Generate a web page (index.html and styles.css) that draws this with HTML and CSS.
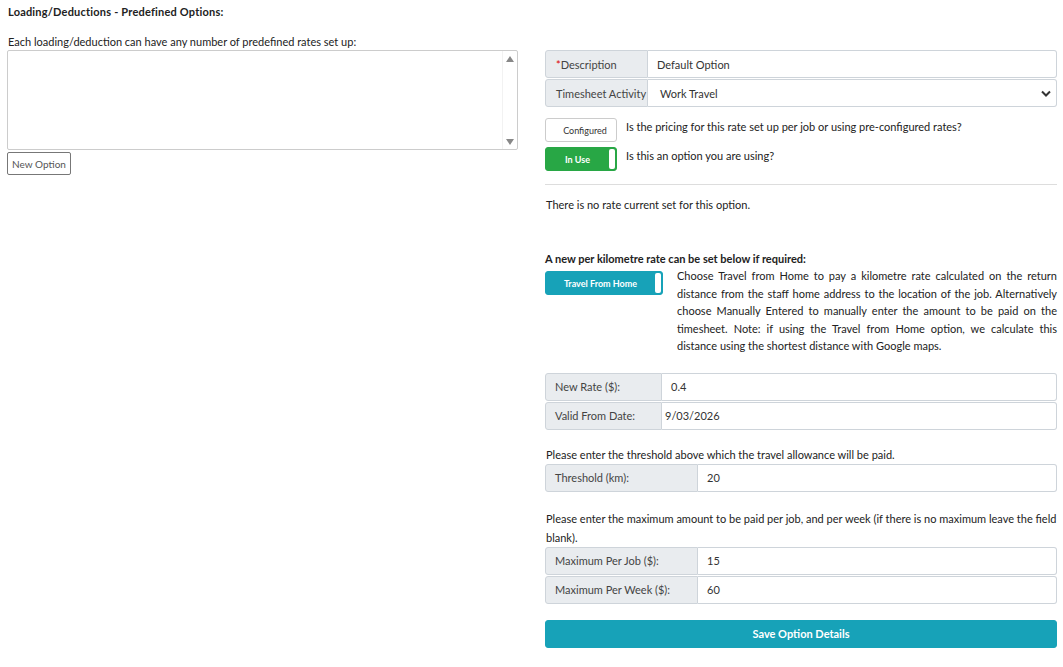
FILE: index.html
```html
<html>
	<head>
		<link rel="stylesheet" href="styles.css">
	</head>
	<body>
		<div class="title">Loading/Deductions - Predefined Options:</div>
		<div class="page">
			<div class="left">
				<div class="intro">Each loading/deduction can have any number of predefined rates set up:</div>
				<div class="listbox">
					<div class="scroll">
						<span class="arrow up"></span>
						<span class="arrow down"></span>
					</div>
				</div>
				<button class="btn-new">New Option</button>
			</div>

			<div class="right">
				<div class="group">
					<div class="row">
						<div class="lbl lbl-desc"><span class="req">*</span>Description</div>
						<div class="val">Default Option</div>
					</div>
					<div class="row">
						<div class="lbl lbl-desc">Timesheet Activity</div>
						<div class="val val-select">Work Travel
							<svg class="chev" width="10" height="7" viewBox="0 0 10 7"><path d="M1 1.5 L5 5.5 L9 1.5" fill="none" stroke="#333" stroke-width="2"/></svg>
						</div>
					</div>
				</div>

				<div class="toggles">
					<div class="trow">
						<div class="toggle off">Configured</div>
						<div class="tlabel">Is the pricing for this rate set up per job or using pre-configured rates?</div>
					</div>
					<div class="trow">
						<div class="toggle green"><span class="ttext">In Use</span><span class="knob"></span></div>
						<div class="tlabel">Is this an option you are using?</div>
					</div>
				</div>

				<hr class="sep">

				<div class="norate">There is no rate current set for this option.</div>

				<div class="sub">A new per kilometre rate can be set below if required:</div>
				<div class="travel">
					<div class="toggle teal wide"><span class="ttext">Travel From Home</span><span class="knob"></span></div>
					<p class="explain">Choose Travel from Home to pay a kilometre rate calculated on the return distance from the staff home address to the location of the job. Alternatively choose Manually Entered to manually enter the amount to be paid on the timesheet. Note: if using the Travel from Home option, we calculate this distance using the shortest distance with Google maps.</p>
				</div>

				<div class="group g-rate">
					<div class="row">
						<div class="lbl lbl-rate">New Rate ($):</div>
						<div class="val val-pad">0.4</div>
					</div>
					<div class="row">
						<div class="lbl lbl-rate">Valid From Date:</div>
						<div class="val val-date">9/03/2026</div>
					</div>
				</div>

				<div class="note">Please enter the threshold above which the travel allowance will be paid.</div>
				<div class="group">
					<div class="row">
						<div class="lbl lbl-max">Threshold (km):</div>
						<div class="val">20</div>
					</div>
				</div>

				<div class="note note-max">Please enter the maximum amount to be paid per job, and per week (if there is no maximum leave the field blank).</div>
				<div class="group">
					<div class="row">
						<div class="lbl lbl-max">Maximum Per Job ($):</div>
						<div class="val">15</div>
					</div>
					<div class="row">
						<div class="lbl lbl-max">Maximum Per Week ($):</div>
						<div class="val">60</div>
					</div>
				</div>

				<button class="btn-save">Save Option Details</button>
			</div>
		</div>
	</body>
</html>
```

FILE: styles.css
```css
body {
	margin: 0;
	padding: 0 6px 0 7px;
	background: #fff;
	font-family: Lato, "Open Sans", sans-serif;
	font-size: 11px;
	color: #222;
}

.title {
	font-weight: bold;
	padding: 5px 0 0 1px;
	height: 24px;
	letter-spacing: 0.2px;
}

.page {
	display: grid;
	grid-template-columns: 511px 512px;
	column-gap: 27px;
}

.intro {
	padding-left: 1px;
	height: 15px;
	margin-top: 6px;
}

.listbox {
	height: 98px;
	border: 1px solid #ccc;
	border-radius: 2px;
	display: flex;
	justify-content: flex-end;
}

.scroll {
	width: 14px;
	display: flex;
	flex-direction: column;
	justify-content: space-between;
	align-items: center;
	padding: 5px 0 4px;
	border-left: 1px solid #f2f2f2;
}

.arrow {
	width: 0;
	height: 0;
	border-left: 4px solid transparent;
	border-right: 4px solid transparent;
}

.arrow.up {
	border-bottom: 6px solid #888;
}

.arrow.down {
	border-top: 6px solid #888;
}

.btn-new {
	margin-top: 2px;
	height: 23px;
	width: 64px;
	padding: 0;
	border: 1px solid #777;
	border-radius: 2px;
	background: #fff;
	color: #555;
	font-family: Lato, "Open Sans", sans-serif;
	font-size: 10px;
}

.right {
	padding-top: 21px;
}

.group {
	display: flex;
	flex-direction: column;
	gap: 1px;
}

.row {
	display: flex;
	height: 28px;
}

.lbl {
	background: #e9ecef;
	border: 1px solid #ced4da;
	border-radius: 3px 0 0 3px;
	display: flex;
	align-items: center;
	padding-left: 9px;
	color: #444;
	box-sizing: border-box;
}

.lbl-desc {
	width: 103px;
	padding-left: 9px;
}

.lbl-desc:first-child {
	padding-left: 10px;
}

.req {
	color: #d00;
}

.lbl-rate {
	width: 117px;
}

.lbl-max {
	width: 153px;
}

.val {
	flex: 1;
	border: 1px solid #ced4da;
	border-left: none;
	border-radius: 0 3px 3px 0;
	display: flex;
	align-items: center;
	padding-left: 9px;
	color: #333;
}

.val-select {
	padding-left: 12px;
	justify-content: space-between;
	padding-right: 5px;
}

.val-pad {
	padding-left: 9px;
}

.val-date {
	padding-left: 3px;
}

.toggles {
	margin-top: 11px;
	display: flex;
	flex-direction: column;
	gap: 5px;
}

.trow {
	display: flex;
	gap: 9px;
}

.tlabel {
	padding-top: 2px;
}

.toggle {
	width: 72px;
	height: 24px;
	box-sizing: border-box;
	border-radius: 3px;
	display: flex;
	align-items: center;
	font-size: 9px;
	font-weight: bold;
}

.toggle.off {
	border: 1px solid #ccc;
	justify-content: center;
	color: #333;
	font-weight: normal;
	padding-left: 8px;
}

.toggle.green {
	background: #28a745;
	color: #fff;
	border: 1px solid #28a745;
}

.toggle.teal {
	background: #17a2b8;
	color: #fff;
	border: 1px solid #17a2b8;
}

.ttext {
	flex: 1;
	text-align: center;
}

.knob {
	width: 6px;
	height: 20px;
	background: #fff;
	border-radius: 2px;
	margin-right: 1px;
}

.toggle.wide {
	width: 118px;
	flex-shrink: 0;
}

.sep {
	border: none;
	border-top: 1px solid #ddd;
	margin: 13px 0 0;
}

.norate {
	margin-top: 13px;
	padding-left: 1px;
}

.sub {
	font-weight: bold;
	margin-top: 41px;
}

.travel {
	display: flex;
	gap: 14px;
	margin-top: 6px;
}

.explain {
	margin: -4px 0 0;
	text-align: justify;
	line-height: 17.5px;
}

.g-rate {
	margin-top: 18px;
}

.note {
	margin-top: 18px;
	height: 16px;
	padding-left: 1px;
}

.note-max {
	margin-top: 17px;
	height: auto;
	line-height: 19px;
	margin-bottom: 0;
}

.btn-save {
	margin-top: 16px;
	width: 100%;
	height: 28px;
	background: #17a2b8;
	border: 1px solid #17a2b8;
	border-radius: 3px;
	color: #fff;
	font-family: Lato, "Open Sans", sans-serif;
	font-size: 11px;
	font-weight: bold;
}
```
